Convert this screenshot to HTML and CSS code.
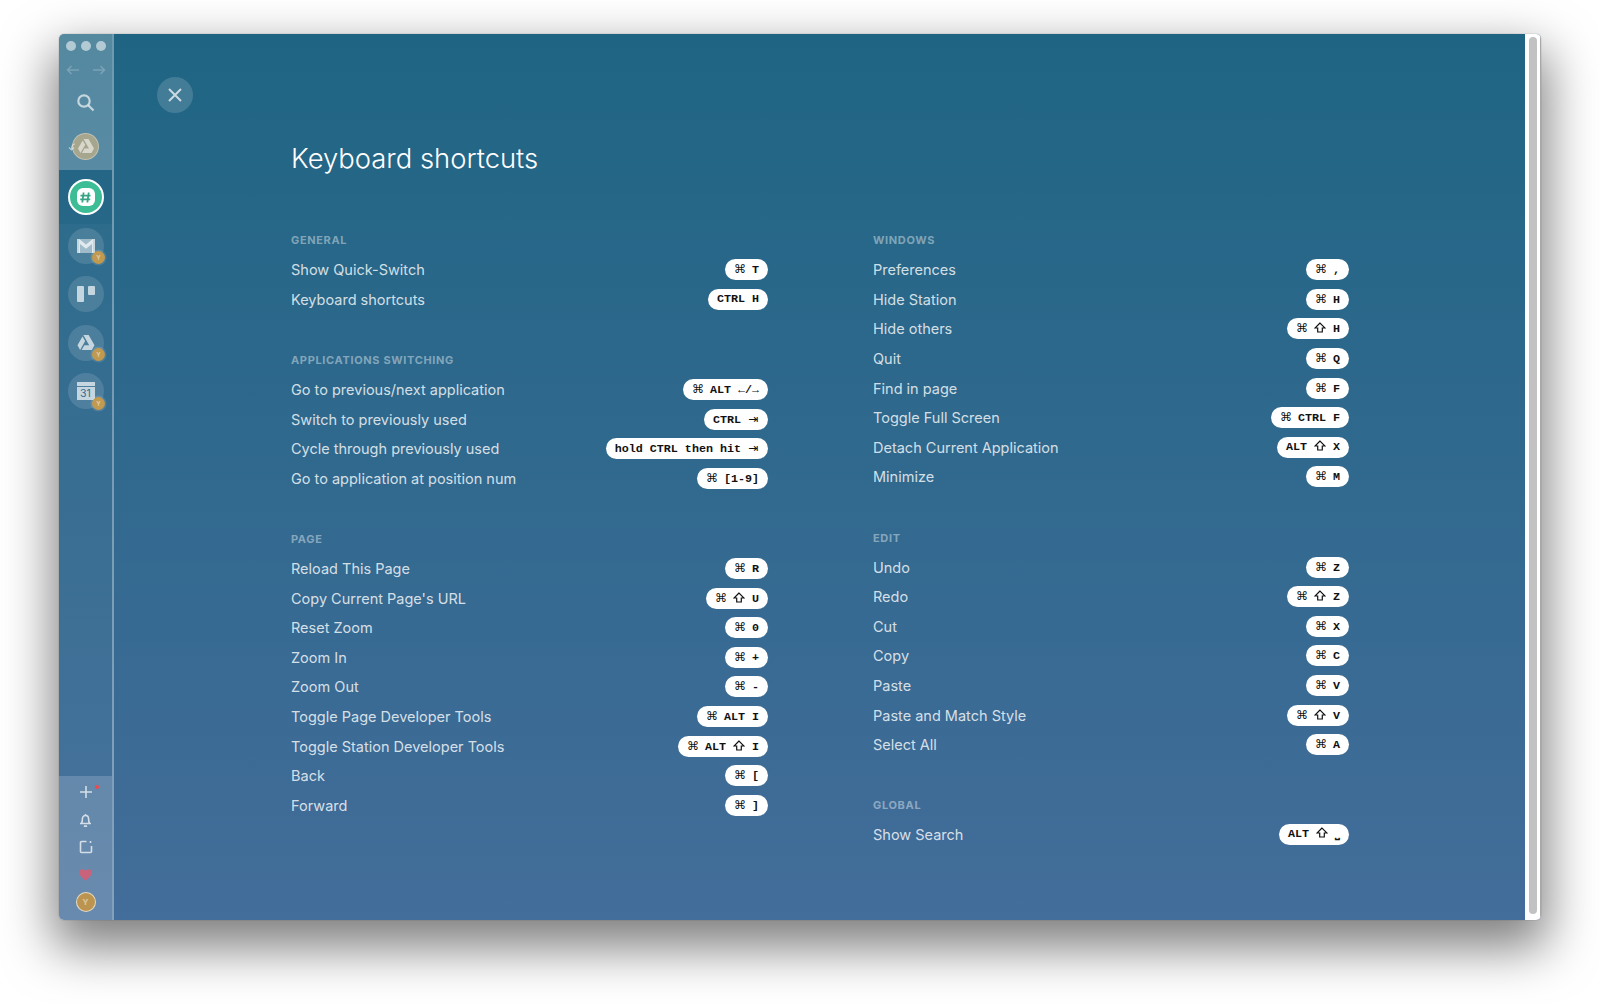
FILE: index.html
```html
<!DOCTYPE html>
<html lang="en">
<head>
    <meta charset="UTF-8">
    <title>Keyboard shortcuts</title>
    <link rel="stylesheet" href="styles.css">
</head>
<body>
    <svg class="defs" width="0" height="0">
        <symbol id="shift" viewBox="0 0 12 11"><path d="M6 1 1 6h2.700v4h4.600V6H11z" /></symbol>
    </svg>
    <div class="window">
        <nav class="sidebar">
            <div class="side-top">
                <div class="traffic"><i></i><i></i><i></i></div>
                <div class="history">
                    <svg width="14" height="10" viewBox="0 0 14 10"><path d="M13 5H1.500M5.500 1 1.500 5l4 4" /></svg>
                    <svg width="14" height="10" viewBox="0 0 14 10"><path d="M1 5h11.500M8.500 1l4 4-4 4" /></svg>
                </div>
                <svg class="search" width="20" height="20" viewBox="0 0 20 20"><circle cx="8" cy="8" r="5.700" /><path d="m12.300 12.300 5.200 5.200" /></svg>
                <div class="recent">
                    <svg class="recent-back" width="8" height="8" viewBox="0 0 8 8"><path d="M7 1C5 1 3.500 2.500 3.500 6.500M1 4.500l2.500 2.500L6 4.500" /></svg>
                    <svg width="16" height="15" viewBox="0 0 16 15"><path class="drive-fill" d="M5.500 0h5l5.500 9.500h-5zM4.700 1.400 7.200 5.700 2.500 14 0 9.600zM3.900 14l2.600-4.500H16L13.400 14z" /></svg>
                </div>
            </div>
            <div class="side-active">
                <div class="slack">
                    <div class="slack-inner">
                        <svg width="13" height="13" viewBox="0 0 13 13"><path d="M4.600 1.500 3.300 11.500M9.700 1.500 8.400 11.500M1.500 4.600h10M1.200 8.400h10" /></svg>
                    </div>
                </div>
            </div>
            <div class="side-apps">
                <div class="app">
                    <svg width="18" height="14" viewBox="0 0 18 14"><path class="mail-body" d="M2 0h14v14H2z" /><path d="M0 0h2.200L9 5.600 15.800 0H18v14h-3V5L9 9.800 3 5v9H0z" /></svg>
                    <span class="badge">Y</span>
                </div>
                <div class="app">
                    <svg width="18" height="16" viewBox="0 0 18 16"><rect width="7" height="16" rx="1" /><rect x="11" width="7" height="9" rx="1" /></svg>
                </div>
                <div class="app">
                    <svg width="18" height="16" viewBox="0 0 16 15"><path d="M5.500 0h5l5.500 9.500h-5zM4.700 1.400 7.200 5.700 2.500 14 0 9.600zM3.900 14l2.600-4.500H16L13.400 14z" /></svg>
                    <span class="badge">Y</span>
                </div>
                <div class="app">
                    <div class="cal"><span class="cal-head"></span><span class="cal-day">31</span></div>
                    <span class="badge">Y</span>
                </div>
            </div>
            <div class="side-bottom">
                <div class="tool add">
                    <svg width="14" height="14" viewBox="0 0 14 14"><path d="M7 1v12M1 7h12" /></svg>
                    <span class="red-dot"></span>
                </div>
                <div class="tool">
                    <svg width="13" height="14" viewBox="0 0 13 14"><path d="M1 10.500h11M2.400 10.500c1-1.300 1-2.500 1-4.500 0-1.900 1.300-3.500 3.100-3.500s3.100 1.600 3.100 3.500c0 2 0 3.200 1 4.500M5 12.700c.8.500 2.200.5 3 0M6.500 1v1.400" /></svg>
                </div>
                <div class="tool">
                    <svg width="14" height="14" viewBox="0 0 14 14"><path d="M7.500 1.500H2.500a1 1 0 0 0-1 1v9a1 1 0 0 0 1 1h9a1 1 0 0 0 1-1V6M11.500 1v2" /></svg>
                </div>
                <div class="tool">
                    <svg class="heart" width="13" height="12" viewBox="0 0 13 12"><path d="M6.500 12 .9 6.200C-.5 4.600-.2 2.200 1.100 1 2.600-.4 5 0 6.500 1.900 8-.1 10.400-.4 11.900 1c1.300 1.200 1.600 3.600.2 5.200z" /></svg>
                </div>
                <div class="me">Y</div>
            </div>
        </nav>

        <main class="content">
            <div class="close">
                <svg width="14" height="14" viewBox="0 0 14 14"><path d="m1 1 12 12M13 1 1 13" /></svg>
            </div>
            <h1>Keyboard shortcuts</h1>
            <div class="columns">
                <div class="column">
                    <section>
                        <h2>General</h2>
                        <div class="row"><span>Show Quick-Switch</span><kbd><b>⌘</b> T</kbd></div>
                        <div class="row"><span>Keyboard shortcuts</span><kbd>CTRL H</kbd></div>
                    </section>
                    <section>
                        <h2>Applications switching</h2>
                        <div class="row"><span>Go to previous/next application</span><kbd><b>⌘</b> ALT ←/→</kbd></div>
                        <div class="row"><span>Switch to previously used</span><kbd>CTRL <b>⇥</b></kbd></div>
                        <div class="row"><span>Cycle through previously used</span><kbd>hold CTRL then hit <b>⇥</b></kbd></div>
                        <div class="row"><span>Go to application at position num</span><kbd><b>⌘</b> [1-9]</kbd></div>
                    </section>
                    <section>
                        <h2>Page</h2>
                        <div class="row"><span>Reload This Page</span><kbd><b>⌘</b> R</kbd></div>
                        <div class="row"><span>Copy Current Page's URL</span><kbd><b>⌘</b> <svg class="shift"><use href="#shift" /></svg> U</kbd></div>
                        <div class="row"><span>Reset Zoom</span><kbd><b>⌘</b> 0</kbd></div>
                        <div class="row"><span>Zoom In</span><kbd><b>⌘</b> +</kbd></div>
                        <div class="row"><span>Zoom Out</span><kbd><b>⌘</b> -</kbd></div>
                        <div class="row"><span>Toggle Page Developer Tools</span><kbd><b>⌘</b> ALT I</kbd></div>
                        <div class="row"><span>Toggle Station Developer Tools</span><kbd><b>⌘</b> ALT <svg class="shift"><use href="#shift" /></svg> I</kbd></div>
                        <div class="row"><span>Back</span><kbd><b>⌘</b> [</kbd></div>
                        <div class="row"><span>Forward</span><kbd><b>⌘</b> ]</kbd></div>
                    </section>
                </div>
                <div class="column">
                    <section>
                        <h2>Windows</h2>
                        <div class="row"><span>Preferences</span><kbd><b>⌘</b> ,</kbd></div>
                        <div class="row"><span>Hide Station</span><kbd><b>⌘</b> H</kbd></div>
                        <div class="row"><span>Hide others</span><kbd><b>⌘</b> <svg class="shift"><use href="#shift" /></svg> H</kbd></div>
                        <div class="row"><span>Quit</span><kbd><b>⌘</b> Q</kbd></div>
                        <div class="row"><span>Find in page</span><kbd><b>⌘</b> F</kbd></div>
                        <div class="row"><span>Toggle Full Screen</span><kbd><b>⌘</b> CTRL F</kbd></div>
                        <div class="row"><span>Detach Current Application</span><kbd>ALT <svg class="shift"><use href="#shift" /></svg> X</kbd></div>
                        <div class="row"><span>Minimize</span><kbd><b>⌘</b> M</kbd></div>
                    </section>
                    <section>
                        <h2>Edit</h2>
                        <div class="row"><span>Undo</span><kbd><b>⌘</b> Z</kbd></div>
                        <div class="row"><span>Redo</span><kbd><b>⌘</b> <svg class="shift"><use href="#shift" /></svg> Z</kbd></div>
                        <div class="row"><span>Cut</span><kbd><b>⌘</b> X</kbd></div>
                        <div class="row"><span>Copy</span><kbd><b>⌘</b> C</kbd></div>
                        <div class="row"><span>Paste</span><kbd><b>⌘</b> V</kbd></div>
                        <div class="row"><span>Paste and Match Style</span><kbd><b>⌘</b> <svg class="shift"><use href="#shift" /></svg> V</kbd></div>
                        <div class="row"><span>Select All</span><kbd><b>⌘</b> A</kbd></div>
                    </section>
                    <section>
                        <h2>Global</h2>
                        <div class="row"><span>Show Search</span><kbd>ALT <svg class="shift"><use href="#shift" /></svg> ⎵</kbd></div>
                    </section>
                </div>
            </div>
        </main>

        <div class="scrollbar"><div class="thumb"></div></div>
    </div>
</body>
</html>
```

FILE: styles.css
```css
/* Page and window */
html, body {
    margin: 0;
    height: 100%;
    background: #fff;
    overflow: hidden;
}

body {
    padding: 34px 59px 84px;
    box-sizing: border-box;
    font-family: 'Inter', 'Liberation Sans', sans-serif;
}

.defs {
    display: block;
}

.window {
    display: flex;
    height: 886px;
    border-radius: 5px;
    overflow: hidden;
    background: linear-gradient(#1f6583, #436d9a);
    box-shadow: 0 0 0 1px rgba(0, 0, 0, 0.06), 0 22px 50px 6px rgba(0, 0, 0, 0.5);
}

/* Sidebar */
.sidebar {
    width: 53px;
    flex: none;
    display: flex;
    flex-direction: column;
    border-right: 2px solid rgba(255, 255, 255, 0.35);
    color: #fff;
}

.side-top {
    height: 136px;
    background: rgba(255, 255, 255, 0.24);
    display: flex;
    flex-direction: column;
    align-items: center;
}

.traffic {
    display: flex;
    gap: 5px;
    margin-top: 7px;
}

.traffic i {
    width: 10px;
    height: 10px;
    border-radius: 50%;
    background: rgba(255, 255, 255, 0.55);
}

.history {
    display: flex;
    gap: 12px;
    margin-top: 14px;
    height: 10px;
}

.history svg {
    fill: none;
    stroke: rgba(255, 255, 255, 0.22);
    stroke-width: 1.5;
}

.search {
    margin-top: 18px;
    fill: none;
    stroke: rgba(255, 255, 255, 0.65);
    stroke-width: 2.2;
}

.recent {
    position: relative;
    width: 27px;
    height: 27px;
    margin-top: 20px;
    border-radius: 50%;
    border: 1px solid rgba(255, 255, 255, 0.3);
    background: #a6a68f;
    display: flex;
    align-items: center;
    justify-content: center;
    box-sizing: border-box;
}

.recent-back {
    position: absolute;
    left: -5px;
    top: 9px;
    fill: none;
    stroke: rgba(255, 255, 255, 0.55);
    stroke-width: 1.2;
}

.drive-fill {
    fill: rgba(255, 255, 255, 0.55);
}

.side-active {
    height: 54px;
    display: flex;
    align-items: center;
    justify-content: center;
}

.slack {
    width: 36px;
    height: 36px;
    border-radius: 50%;
    border: 2px solid #fff;
    box-sizing: border-box;
    background: #3cbd95;
    display: flex;
    align-items: center;
    justify-content: center;
}

.slack-inner {
    width: 18px;
    height: 18px;
    border-radius: 6px;
    background: #fff;
    display: flex;
    align-items: center;
    justify-content: center;
}

.slack-inner svg {
    fill: none;
    stroke: #35a585;
    stroke-width: 1.8;
}

.side-apps {
    flex: 1;
    background: rgba(255, 255, 255, 0.035);
    display: flex;
    flex-direction: column;
    align-items: center;
    gap: 12.6px;
    padding-top: 3.5px;
}

.app {
    position: relative;
    width: 36px;
    height: 36px;
    border-radius: 50%;
    background: rgba(255, 255, 255, 0.13);
    display: flex;
    align-items: center;
    justify-content: center;
}

.app svg {
    fill: rgba(255, 255, 255, 0.68);
}

.mail-body {
    opacity: 0.7;
}

.badge {
    position: absolute;
    right: -1.5px;
    bottom: -0.5px;
    width: 13px;
    height: 13px;
    border-radius: 50%;
    background: #c1994f;
    box-shadow: 0 0 0 1.5px rgba(255, 255, 255, 0.12);
    color: rgba(255, 255, 255, 0.5);
    font-size: 6px;
    font-weight: 700;
    line-height: 13px;
    text-align: center;
}

.cal {
    width: 18px;
    height: 18px;
    display: flex;
    flex-direction: column;
}

.cal-head {
    height: 4px;
    background: rgba(255, 255, 255, 0.68);
}

.cal-day {
    flex: 1;
    margin-top: 1px;
    background: rgba(255, 255, 255, 0.68);
    color: #2f6b8f;
    font-size: 10.5px;
    line-height: 13px;
    text-align: center;
}

.side-bottom {
    height: 144px;
    background: rgba(255, 255, 255, 0.2);
    display: flex;
    flex-direction: column;
    align-items: center;
    padding-top: 2.5px;
    box-sizing: border-box;
}

.tool {
    position: relative;
    height: 27.5px;
    display: flex;
    align-items: center;
    justify-content: center;
}

.tool svg {
    fill: none;
    stroke: rgba(255, 255, 255, 0.72);
    stroke-width: 1.6;
}

.tool svg.heart {
    fill: #c9637b;
    stroke: none;
}

.red-dot {
    position: absolute;
    top: 6px;
    right: -6px;
    width: 4px;
    height: 4px;
    border-radius: 50%;
    background: #f0494f;
}

.me {
    width: 20px;
    height: 20px;
    margin-top: 3.5px;
    border-radius: 50%;
    box-sizing: border-box;
    border: 1px solid rgba(255, 255, 255, 0.65);
    background: #bb954f;
    color: rgba(255, 255, 255, 0.5);
    font-size: 8px;
    font-weight: 700;
    line-height: 18px;
    text-align: center;
}

/* Content */
.content {
    flex: 1;
    padding-top: 43px;
}

.close {
    width: 36px;
    height: 36px;
    margin-left: 43px;
    border-radius: 50%;
    background: rgba(255, 255, 255, 0.15);
    display: flex;
    align-items: center;
    justify-content: center;
}

.close svg {
    fill: none;
    stroke: rgba(255, 255, 255, 0.72);
    stroke-width: 2;
}

h1 {
    margin: 27px 0 0 177px;
    font-size: 27.4px;
    line-height: 36px;
    font-weight: 300;
    color: #fff;
}

.columns {
    display: grid;
    grid-template-columns: 477px 476px;
    column-gap: 105px;
    margin: 49.4px 0 0 177px;
}

section + section {
    margin-top: 31px;
}

h2 {
    margin: 0;
    padding-top: 2px;
    font-size: 11px;
    line-height: 27.6px;
    font-weight: 700;
    letter-spacing: 0.65px;
    text-transform: uppercase;
    color: rgba(255, 255, 255, 0.42);
}

.row {
    display: flex;
    justify-content: space-between;
    align-items: center;
    height: 29.6px;
    font-size: 14.5px;
    color: rgba(255, 255, 255, 0.8);
}

kbd {
    height: 21px;
    padding: 0 9px;
    border-radius: 11px;
    background: #fff;
    color: #111;
    font-family: 'Liberation Mono', 'DejaVu Sans Mono', monospace;
    font-size: 11.7px;
    font-weight: 700;
    line-height: 21px;
    white-space: pre;
}

/* the cmd and tab glyphs are wider than the mono cell */
kbd b {
    display: inline-block;
    width: 11px;
    text-align: center;
    font-family: 'DejaVu Sans', sans-serif;
    font-size: 12px;
    font-weight: 400;
}

.shift {
    width: 12px;
    height: 11px;
    vertical-align: -1px;
    fill: none;
    stroke: #111;
    stroke-width: 1.2;
}

/* Scrollbar */
.scrollbar {
    width: 16px;
    flex: none;
    background: #fff;
    padding: 3px 3px 6px 4px;
    border-right: 1px solid #a8a8a8;
    box-sizing: border-box;
}

.thumb {
    height: 100%;
    border-radius: 4px;
    background: #c2c2c2;
}
```
